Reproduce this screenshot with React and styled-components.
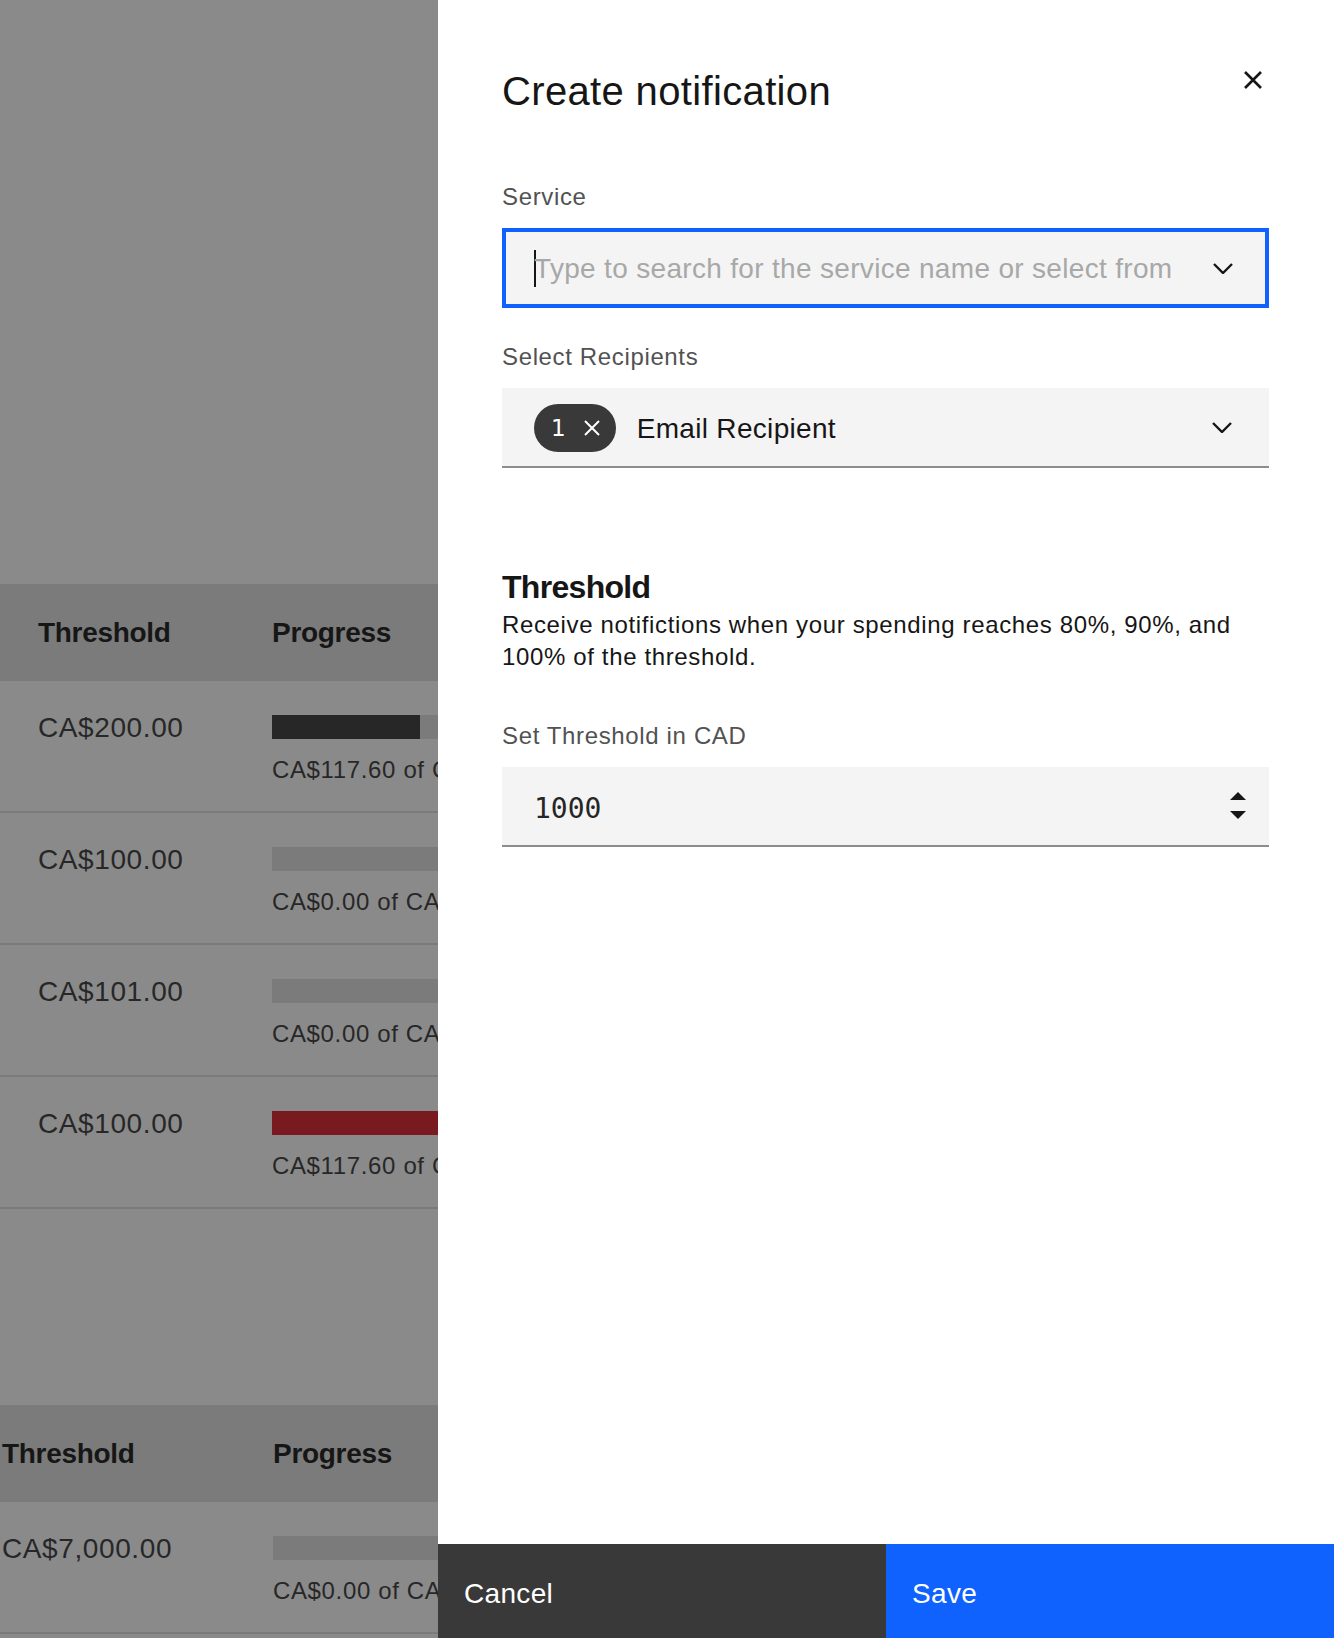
import React from 'react';
import styled, { createGlobalStyle } from 'styled-components';

const GlobalStyle = createGlobalStyle`
  html, body {
    margin: 0;
    padding: 0;
    overflow: hidden;
  }
  body {
    font-family: "Liberation Sans", Arial, sans-serif;
    background: #ffffff;
    color: #161616;
  }
  * { box-sizing: border-box; }
`;

// ---------- page behind the panel ----------

const Page = styled.main`
  padding-top: 584px;
  height: 1638px;
  overflow: hidden;
`;

const Table = styled.section`
  & + & {
    margin-top: 196px;
  }
`;

const HeadRow = styled.div`
  display: grid;
  grid-template-columns: ${p => p.$first}px 1fr;
  align-items: center;
  height: 97px;
  padding-left: ${p => p.$inset}px;
  background: #e0e0e0;
`;

const HeadCell = styled.div`
  font-size: 28px;
  line-height: 40px;
  font-weight: 700;
  letter-spacing: -0.3px;
  color: #161616;
`;

const Row = styled.div`
  display: grid;
  grid-template-columns: ${p => p.$first}px 1fr;
  align-items: start;
  height: 132px;
  padding-left: ${p => p.$inset}px;
  border-bottom: 2px solid #e0e0e0;
`;

const ValueCell = styled.div`
  padding-top: 27px;
  font-size: 28px;
  line-height: 40px;
  letter-spacing: 0.6px;
  color: #393939;
`;

const ProgressCell = styled.div`
  padding-top: 34px;
`;

const Track = styled.div`
  width: 252px;
  height: 24px;
  background: #e0e0e0;
`;

const Fill = styled.div`
  height: 100%;
  background: ${p => (p.$over ? '#da1e28' : '#393939')};
`;

const ProgressText = styled.div`
  margin-top: 15px;
  font-size: 24px;
  line-height: 32px;
  letter-spacing: 0.64px;
  color: #393939;
  white-space: nowrap;
`;

// ---------- overlay + side panel ----------

const Overlay = styled.div`
  position: fixed;
  inset: 0;
  background: rgba(22, 22, 22, 0.5);
`;

const Panel = styled.aside`
  position: fixed;
  top: 0;
  right: 0;
  bottom: 0;
  width: 896px;
  display: flex;
  flex-direction: column;
  background: #ffffff;
`;

const Body = styled.div`
  flex: 1;
  padding: 63px 65px 0 64px;
`;

const Header = styled.header`
  display: flex;
  justify-content: space-between;
  align-items: flex-start;
`;

const Title = styled.h2`
  margin: 0;
  font-size: 40px;
  line-height: 56px;
  font-weight: 400;
  letter-spacing: 0.35px;
  color: #161616;
`;

const CloseButton = styled.button`
  display: flex;
  align-items: center;
  justify-content: center;
  width: 32px;
  height: 32px;
  margin-top: 1px;
  padding: 0;
  border: 0;
  background: transparent;
  cursor: pointer;
`;

const Field = styled.div`
  margin-top: ${p => p.$gap}px;
`;

const Label = styled.label`
  display: block;
  margin-bottom: 15px;
  font-size: 24px;
  line-height: 32px;
  letter-spacing: 0.64px;
  color: #525252;
`;

const ComboBox = styled.div`
  display: flex;
  align-items: center;
  gap: 36px;
  height: 80px;
  padding: 0 32px 0 28px;
  background: #f4f4f4;
  border: 4px solid #0f62fe;
`;

const Caret = styled.span`
  flex-shrink: 0;
  width: 2px;
  height: 37px;
  margin-right: -38px;
  background: #161616;
`;

const Placeholder = styled.span`
  flex: 1;
  min-width: 0;
  overflow: hidden;
  white-space: nowrap;
  padding-top: 2px;
  font-size: 28px;
  line-height: 40px;
  letter-spacing: 0.32px;
  color: #a8a8a8;
`;

const Select = styled.div`
  display: flex;
  align-items: center;
  height: 80px;
  padding: 0 37px 0 32px;
  background: #f4f4f4;
  border-bottom: 2px solid #8d8d8d;
`;

const Tag = styled.span`
  display: inline-flex;
  align-items: center;
  gap: 18px;
  height: 48px;
  margin-top: 2px;
  padding: 0 16px 0 17px;
  border-radius: 24px;
  background: #393939;
  color: #ffffff;
`;

const TagCount = styled.span`
  font-family: "DejaVu Sans", sans-serif;
  font-size: 23px;
  line-height: 32px;
`;

const SelectValue = styled.span`
  flex: 1;
  margin-left: 21px;
  padding-top: 4px;
  font-size: 28px;
  line-height: 40px;
  letter-spacing: 0.32px;
  color: #161616;
`;

const SectionTitle = styled.h3`
  margin: 97px 0 0;
  font-size: 32px;
  line-height: 44px;
  font-weight: 700;
  letter-spacing: -0.7px;
  color: #161616;
`;

const Description = styled.p`
  margin: 0;
  font-size: 24px;
  line-height: 32px;
  letter-spacing: 0.64px;
  color: #161616;
`;

const NumberInput = styled.div`
  display: flex;
  align-items: center;
  justify-content: space-between;
  height: 80px;
  padding: 0 23px 0 32px;
  background: #f4f4f4;
  border-bottom: 2px solid #8d8d8d;
`;

const NumberValue = styled.span`
  padding-top: 6px;
  font-family: "DejaVu Sans Mono", "Liberation Mono", monospace;
  font-size: 28px;
  line-height: 40px;
  color: #262626;
`;

const Footer = styled.footer`
  display: grid;
  grid-template-columns: 1fr 1fr;
  height: 94px;
`;

const FooterButton = styled.button`
  display: flex;
  align-items: flex-start;
  padding: 32px 26px 0;
  border: 0;
  font-family: inherit;
  font-size: 28px;
  line-height: 36px;
  letter-spacing: 0.32px;
  color: #ffffff;
  background: ${p => (p.$kind === 'primary' ? '#0f62fe' : '#393939')};
  cursor: pointer;
`;

// ---------- icons ----------

const CloseIcon = () => (
  <svg width="18" height="18" viewBox="0 0 18 18">
    <path d="M1 1L17 17M17 1L1 17" stroke="#161616" strokeWidth="2.6" fill="none" />
  </svg>
);

const ChevronDown = () => (
  <svg width="20" height="11" viewBox="0 0 20 11" style={{ flexShrink: 0 }}>
    <polyline points="1,1 10,10 19,1" stroke="#161616" strokeWidth="2.4" fill="none" />
  </svg>
);

const SmallClose = () => (
  <svg width="16" height="16" viewBox="0 0 16 16">
    <path d="M1 1L15 15M15 1L1 15" stroke="#ffffff" strokeWidth="2" fill="none" />
  </svg>
);

const Stepper = () => (
  <svg width="16" height="28" viewBox="0 0 16 28">
    <polygon points="0,8 8,0 16,8" fill="#161616" />
    <polygon points="0,19 16,19 8,27" fill="#161616" />
  </svg>
);

// ---------- data ----------

const budgets = [
  { threshold: 'CA$200.00', spent: 'CA$117.60', pct: 58.8 },
  { threshold: 'CA$100.00', spent: 'CA$0.00', pct: 0 },
  { threshold: 'CA$101.00', spent: 'CA$0.00', pct: 0 },
  { threshold: 'CA$100.00', spent: 'CA$117.60', pct: 100, over: true },
];

const accountBudgets = [
  { threshold: 'CA$7,000.00', spent: 'CA$0.00', pct: 0 },
];

const BudgetTable = ({ rows, inset, first }) => (
  <Table>
    <HeadRow $inset={inset} $first={first}>
      <HeadCell>Threshold</HeadCell>
      <HeadCell>Progress</HeadCell>
    </HeadRow>
    {rows.map((row, i) => (
      <Row key={i} $inset={inset} $first={first}>
        <ValueCell>{row.threshold}</ValueCell>
        <ProgressCell>
          <Track>
            <Fill $over={row.over} style={{ width: `${row.pct}%` }} />
          </Track>
          <ProgressText>{row.spent} of {row.threshold}</ProgressText>
        </ProgressCell>
      </Row>
    ))}
  </Table>
);

export default function App() {
  return (
    <>
      <GlobalStyle />
      <Page>
        <BudgetTable rows={budgets} inset={38} first={234} />
        <BudgetTable rows={accountBudgets} inset={2} first={271} />
      </Page>
      <Overlay />
      <Panel>
        <Body>
          <Header>
            <Title>Create notification</Title>
            <CloseButton aria-label="Close">
              <CloseIcon />
            </CloseButton>
          </Header>

          <Field $gap={62}>
            <Label>Service</Label>
            <ComboBox>
              <Caret />
              <Placeholder>Type to search for the service name or select from the list</Placeholder>
              <ChevronDown />
            </ComboBox>
          </Field>

          <Field $gap={33}>
            <Label>Select Recipients</Label>
            <Select>
              <Tag>
                <TagCount>1</TagCount>
                <SmallClose />
              </Tag>
              <SelectValue>Email Recipient</SelectValue>
              <ChevronDown />
            </Select>
          </Field>

          <SectionTitle>Threshold</SectionTitle>
          <Description>
            Receive notifictions when your spending reaches 80%, 90%, and 100% of the threshold.
          </Description>

          <Field $gap={47}>
            <Label>Set Threshold in CAD</Label>
            <NumberInput>
              <NumberValue>1000</NumberValue>
              <Stepper />
            </NumberInput>
          </Field>
        </Body>
        <Footer>
          <FooterButton>Cancel</FooterButton>
          <FooterButton $kind="primary">Save</FooterButton>
        </Footer>
      </Panel>
    </>
  );
}
